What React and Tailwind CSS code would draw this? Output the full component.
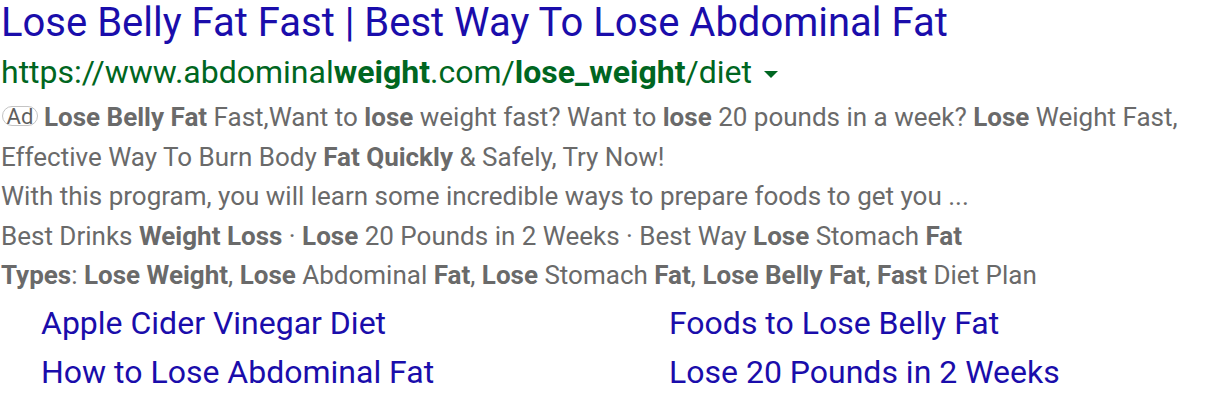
export default function App() {
  const b = "font-bold";
  return (
    <div className="w-[1216px] h-[402px] bg-white overflow-hidden" style={{ fontFamily: "Roboto, 'Liberation Sans', sans-serif" }}>
      <div className="pl-[1px]">
        <div className="text-[40px] leading-[46px] text-[#1a0dab] whitespace-nowrap">
          Lose Belly Fat Fast | Best Way To Lose Abdominal Fat
        </div>
        <div className="flex items-center text-[32px] leading-[52px] text-[#006621] whitespace-nowrap">
          <span>
            https://www.abdominal<span className={b}>weight</span>.com/<span className={b}>lose_weight</span>/diet
          </span>
          <svg width="14" height="7" viewBox="0 0 14 7" className="ml-[12px] mt-[4px]">
            <path d="M0 0 L14 0 L7 7 Z" fill="#006621" />
          </svg>
        </div>
        <div className="text-[26px] leading-[39.5px] text-[#6a6a6a]">
          <div className="whitespace-nowrap">
            <span className="inline-block h-[20px] w-[36px] ml-[1px] mr-[6px] text-center border border-[#c4c4c4] rounded-full text-[22px] leading-[19px] align-[2px] text-[#5f5f5f]">Ad</span>
            <span className={b}>Lose Belly Fat</span> Fast,Want to <span className={b}>lose</span> weight fast? Want to <span className={b}>lose</span> 20 pounds in a week? <span className={b}>Lose</span> Weight Fast,
          </div>
          <div className="whitespace-nowrap">
            Effective Way To Burn Body <span className={b}>Fat Quickly</span> &amp; Safely, Try Now!
          </div>
          <div className="whitespace-nowrap">
            With this program, you will learn some incredible ways to prepare foods to get you ...
          </div>
          <div className="whitespace-nowrap">
            Best Drinks <span className={b}>Weight Loss</span> · <span className={b}>Lose</span> 20 Pounds in 2 Weeks · Best Way <span className={b}>Lose</span> Stomach <span className={b}>Fat</span>
          </div>
          <div className="whitespace-nowrap">
            <span className={b}>Types</span>: <span className={b}>Lose Weight</span>, <span className={b}>Lose</span> Abdominal <span className={b}>Fat</span>, <span className={b}>Lose</span> Stomach <span className={b}>Fat</span>, <span className={b}>Lose Belly Fat</span>, <span className={b}>Fast</span> Diet Plan
          </div>
        </div>
        <div className="grid grid-cols-[628px_1fr] pl-[40px] pt-[3px] text-[32px] leading-[49px] text-[#1a0dab] whitespace-nowrap">
          <div>Apple Cider Vinegar Diet</div>
          <div>Foods to Lose Belly Fat</div>
          <div>How to Lose Abdominal Fat</div>
          <div>Lose 20 Pounds in 2 Weeks</div>
        </div>
      </div>
    </div>
  );
}
